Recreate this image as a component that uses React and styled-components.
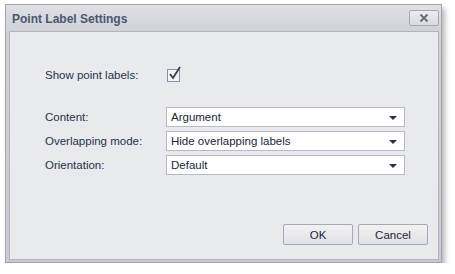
import React from 'react';
import styled, { createGlobalStyle } from 'styled-components';

const Global = createGlobalStyle`
  body {
    margin: 0;
    background: #ffffff;
    font-family: "Liberation Sans", Arial, sans-serif;
  }
`;

const Window = styled.div`
  margin: 4px 0 0 5px;
  width: 437px;
  height: 259px;
  box-sizing: border-box;
  border: 1px solid #a3a4ae;
  background: linear-gradient(#dfe0e4, #cfd0d6 30px, #c9cad1);
  box-shadow: 3px 4px 5px rgba(0, 0, 0, 0.28);
  display: flex;
  flex-direction: column;
  padding: 0 2px 2px 3px;
`;

const TitleBar = styled.div`
  height: 26px;
  display: flex;
  align-items: center;
  justify-content: space-between;
  padding: 0 0 0 3px;
`;

const Title = styled.div`
  font: bold 12px "Liberation Sans", Arial, sans-serif;
  color: #4b5670;
  margin-top: 1px;
`;

const CloseButton = styled.div`
  width: 28px;
  height: 14px;
  border: 1px solid #a7a8b1;
  border-radius: 2px;
  background: linear-gradient(#ececef, #d9dadf);
  display: flex;
  align-items: center;
  justify-content: center;
`;

const Body = styled.div`
  flex: 1;
  background: #e9eaee;
  border: 1px solid #b3b5be;
  display: flex;
  flex-direction: column;
  padding: 36px 10px 14px 35px;
`;

const Row = styled.div`
  display: flex;
  align-items: center;
  height: ${(p) => p.h || 20}px;
  margin-bottom: ${(p) => p.mb ?? 4}px;
`;

const Label = styled.div`
  width: 121px;
  flex-shrink: 0;
  font: 11.5px "Liberation Sans", Arial, sans-serif;
  color: #26324d;
`;

const Check = styled.div`
  width: 11px;
  height: 11px;
  border: 1px solid #8e909c;
  background: #f4f4f6;
  position: relative;
  margin-left: 1px;
`;

const Combo = styled.div`
  width: 239px;
  height: 20px;
  flex-shrink: 0;
  box-sizing: border-box;
  border: 1px solid #b9bbc3;
  background: #ffffff;
  display: flex;
  align-items: center;
  justify-content: space-between;
  padding: 0 7px 0 4px;
  font: 11.5px "Liberation Sans", Arial, sans-serif;
  color: #1e2538;
`;

const Arrow = styled.div`
  width: 0;
  height: 0;
  border-left: 4px solid transparent;
  border-right: 4px solid transparent;
  border-top: 4px solid #2c3245;
  margin-top: 1px;
`;

const Footer = styled.div`
  margin-top: auto;
  display: flex;
  justify-content: flex-end;
  gap: 5px;
`;

const Button = styled.div`
  width: 70px;
  height: 21px;
  box-sizing: border-box;
  border: 1px solid #a8a9b2;
  border-radius: 2px;
  background: linear-gradient(#f2f2f4, #e0e1e5);
  display: flex;
  align-items: center;
  justify-content: center;
  font: 11.5px "Liberation Sans", Arial, sans-serif;
  color: #1e2538;
`;

const Spacer = styled.div`
  height: ${(p) => p.h}px;
`;

const fields = [
  ['Content:', 'Argument'],
  ['Overlapping mode:', 'Hide overlapping labels'],
  ['Orientation:', 'Default'],
];

export default function App() {
  return (
    <>
      <Global />
      <Window>
        <TitleBar>
          <Title>Point Label Settings</Title>
          <CloseButton>
            <svg width="10" height="8" viewBox="0 0 10 8">
              <path d="M1.5 0.5 L8.5 7.5 M8.5 0.5 L1.5 7.5" stroke="#6a6c78" strokeWidth="2" />
            </svg>
          </CloseButton>
        </TitleBar>
        <Body>
          <Row h={14} mb={0}>
            <Label>Show point labels:</Label>
            <Check>
              <svg width="14" height="14" viewBox="0 0 14 14" style={{ position: 'absolute', left: 0, top: -4 }}>
                <path d="M2 8 L5 12 L12 1" fill="none" stroke="#3a3e4c" strokeWidth="1.8" />
              </svg>
            </Check>
          </Row>
          <Spacer h={25} />
          {fields.map(([l, v]) => (
            <Row key={l}>
              <Label>{l}</Label>
              <Combo>
                <span>{v}</span>
                <Arrow />
              </Combo>
            </Row>
          ))}
          <Footer>
            <Button>OK</Button>
            <Button>Cancel</Button>
          </Footer>
        </Body>
      </Window>
    </>
  );
}
